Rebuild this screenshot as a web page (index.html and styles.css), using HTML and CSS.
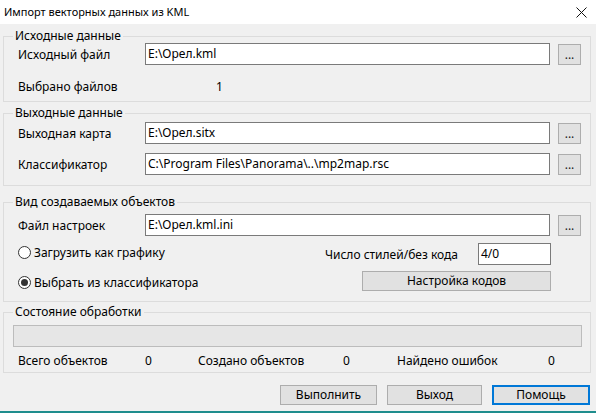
FILE: index.html
```html
<!DOCTYPE html>
<html lang="ru">
<head>
<meta charset="utf-8">
<title>Импорт векторных данных из KML</title>
<link rel="stylesheet" href="styles.css">
</head>
<body>
<div class="window">
  <div class="titlebar">
    <span class="title">Импорт векторных данных из KML</span>
    <span class="close"><svg width="11" height="11" viewBox="0 0 11 11"><path d="M0.5 0.5 L10.5 10.5 M10.5 0.5 L0.5 10.5" stroke="#111" stroke-width="1" fill="none"/></svg></span>
  </div>

  <fieldset class="group g1">
    <legend>Исходные данные</legend>
    <div class="row">
      <span class="lbl">Исходный файл</span>
      <div class="field">E:\Орел.kml</div>
      <button class="browse">...</button>
    </div>
    <div class="row info">
      <span class="lbl">Выбрано файлов</span>
      <span class="val">1</span>
    </div>
  </fieldset>

  <fieldset class="group g2">
    <legend>Выходные данные</legend>
    <div class="row">
      <span class="lbl">Выходная карта</span>
      <div class="field">E:\Орел.sitx</div>
      <button class="browse">...</button>
    </div>
    <div class="row second">
      <span class="lbl">Классификатор</span>
      <div class="field">C:\Program Files\Panorama\..\mp2map.rsc</div>
      <button class="browse">...</button>
    </div>
  </fieldset>

  <fieldset class="group g3">
    <legend>Вид создаваемых объектов</legend>
    <div class="row">
      <span class="lbl">Файл настроек</span>
      <div class="field">E:\Орел.kml.ini</div>
      <button class="browse">...</button>
    </div>
    <div class="options">
      <div class="radios">
        <div class="radio"><span class="circle"></span><span>Загрузить как графику</span></div>
        <div class="radio"><span class="circle checked"></span><span>Выбрать из классификатора</span></div>
      </div>
      <div class="styles">
        <div class="stylerow">
          <span>Число стилей/без кода</span>
          <div class="field small">4/0</div>
        </div>
        <button class="btn codes">Настройка кодов</button>
      </div>
    </div>
  </fieldset>

  <fieldset class="group g4">
    <legend>Состояние обработки</legend>
    <div class="progress"></div>
    <div class="stats">
      <span class="s1">Всего объектов</span><span>0</span>
      <span>Создано объектов</span><span>0</span>
      <span>Найдено ошибок</span><span>0</span>
    </div>
  </fieldset>

  <div class="actions">
    <button class="btn act w1">Выполнить</button>
    <button class="btn act w2">Выход</button>
    <button class="btn act w3 default">Помощь</button>
  </div>
</div>
</body>
</html>
```
FILE: styles.css
```css
* { box-sizing: border-box; }
html, body { margin: 0; padding: 0; }
body {
  width: 596px;
  height: 413px;
  overflow: hidden;
  background: #f0f0f0;
  font-family: "Noto Sans", "Open Sans", "Liberation Sans", sans-serif;
  font-size: 12px;
  color: #000;
}
.window {
  width: 596px;
  height: 413px;
  background: #f0f0f0;
  border-bottom: 2px solid #1f8d8d;
  display: flex;
  flex-direction: column;
}
.titlebar {
  height: 24px;
  background: #fff;
  display: flex;
  align-items: center;
  justify-content: space-between;
  padding: 0 9px 0 4px;
  flex: none;
}
.title { line-height: 16px; font-size: 11px; }
.close { display: flex; width: 11px; height: 11px; margin-top: 1px; }

.group {
  margin: 0 5px 0 3px;
  border: 1px solid #dcdcdc;
  padding: 0 8px 4px 9px;
  min-width: 0;
  flex: none;
}
.group legend {
  padding: 0 2px;
  line-height: 14px;
  font-size: 12px;
}
.g1 { margin-top: 5px; }
.g2 { margin-top: 4px; padding-bottom: 10px; }
.g3 { margin-top: 9px; padding-bottom: 8px; }
.g4 { margin-top: 3px; padding-bottom: 3px; }

.row {
  display: flex;
  align-items: center;
  height: 22px;
}
.g2 .row:first-of-type { margin-top: 2px; }
.g2 .row.second { margin-top: 9px; }
.g3 .row { margin-top: 5px; }
.row.info { margin-top: 10px; }
.lbl {
  width: 132px;
  padding-left: 5px;
  flex: none;
}
.val { margin-left: 71px; }
.field {
  width: 405px;
  height: 22px;
  background: #fff;
  border: 1px solid #7a7a7a;
  padding-left: 2px;
  line-height: 20px;
  white-space: nowrap;
  overflow: hidden;
  flex: none;
}
.browse {
  margin-left: 8px;
  width: 23px;
  height: 21px;
  background: #e1e1e1;
  border: 1px solid #adadad;
  padding: 0 0 2px;
  font: inherit;
  font-size: 12px;
  line-height: 14px;
  color: #222;
  display: flex;
  align-items: flex-end;
  justify-content: center;
  flex: none;
}

.options {
  display: flex;
  justify-content: space-between;
  align-items: flex-start;
  margin-top: 7px;
}
.radios {
  display: flex;
  flex-direction: column;
  gap: 8px;
  margin-top: -2px;
  padding-left: 5px;
}
.radio {
  height: 22px;
  display: flex;
  align-items: center;
  gap: 3px;
}
.circle {
  width: 13px;
  height: 13px;
  border: 1px solid #333;
  border-radius: 50%;
  background: #fff;
  display: flex;
  align-items: center;
  justify-content: center;
  flex: none;
}
.circle.checked::after {
  content: "";
  width: 7px;
  height: 7px;
  border-radius: 50%;
  background: #333;
}
.styles {
  display: flex;
  flex-direction: column;
  align-items: flex-end;
  margin-right: 31px;
}
.stylerow {
  display: flex;
  align-items: center;
  height: 22px;
}
.field.small { width: 73px; margin-left: 20px; }
.btn {
  background: #e1e1e1;
  border: 1px solid #adadad;
  font: inherit;
  font-size: 12px;
  color: #000;
  padding: 0;
  line-height: 16px;
}
.codes {
  width: 189px;
  height: 20px;
  margin-top: 6px;
}

.progress {
  margin-top: 6px;
  height: 22px;
  background: #e6e6e6;
  border: 1px solid #bcbcbc;
}
.stats {
  margin-top: 6px;
  display: grid;
  grid-template-columns: 132px 53px 145px 54px 151px auto;
  line-height: 16px;
  height: 16px;
}
.stats .s1 { padding-left: 5px; }

.actions {
  display: flex;
  justify-content: flex-end;
  gap: 10px;
  margin-top: 12px;
  padding-right: 6px;
}
.act { height: 20px; }
.w1 { width: 97px; }
.w2 { width: 95px; }
.w3 { width: 98px; }
.default { border: 2px solid #0078d7; }
```
